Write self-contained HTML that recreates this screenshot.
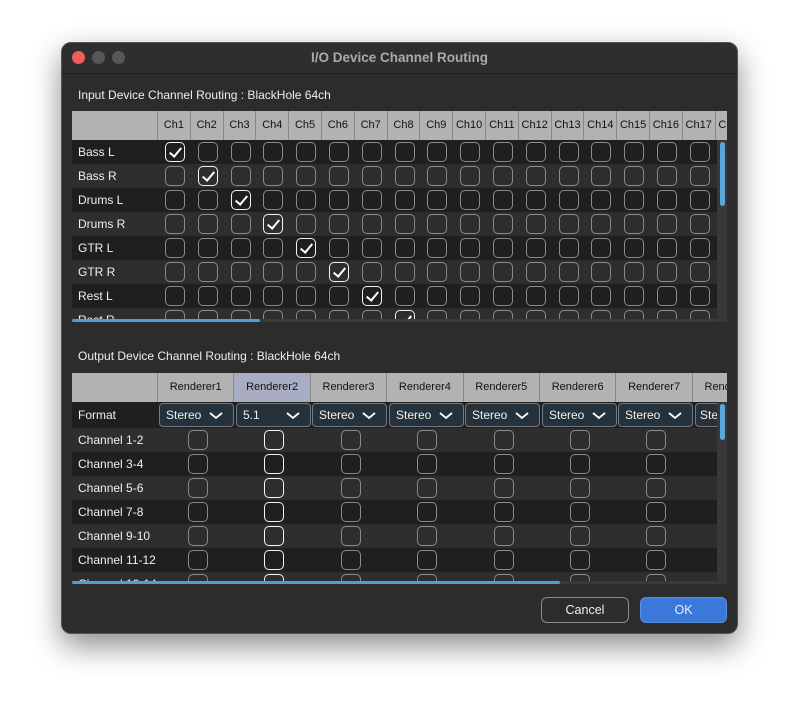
<!DOCTYPE html>
<html><head><style>
*{margin:0;padding:0;box-sizing:border-box}
body{width:799px;height:715px;background:#fff;position:relative;overflow:hidden;font-family:"Liberation Sans",sans-serif}
.win{position:absolute;left:61px;top:42px;width:677px;height:592px;background:#2c2c2c;border-radius:10px;box-shadow:0 12px 30px rgba(0,0,0,.45);border:1px solid #555;overflow:hidden}
.tb{position:absolute;left:0;top:0;width:100%;height:31px;background:#2e2e2e;border-bottom:1px solid #1a1a1a;color:#aaa;font-weight:bold;font-size:13.5px;text-align:center;line-height:29px}
.dot{position:absolute;top:8px;width:13px;height:13px;border-radius:50%;background:#575757}
.abs{position:absolute}
.lbl{position:absolute;color:#eee;font-size:12px}
.hdr{position:absolute;background:#b2b2b2;color:#111;font-size:11px;text-align:center;border-right:1px solid #888}
.row{position:absolute;left:72px;width:648px;height:24px}
.rl{position:absolute;left:78px;color:#f0f0f0;font-size:12px}
.cb{position:absolute;width:20px;height:20px;border:1.5px solid #8a8a8a;border-radius:5px}
.cb.w{border:1.5px solid #f2f2f2}
.cb.w.k::after{content:"";position:absolute;left:6px;top:2px;width:5px;height:10px;border:solid #fff;border-width:0 2px 2px 0;transform:rotate(40deg)}
.combo{position:absolute;top:403px;height:24px;background:#26313a;border:1px solid #6f7a84;border-radius:4px;color:#f0f0f0;font-size:12px;line-height:22px;padding-left:6px}
.combo svg{position:absolute;right:10px;top:8px}
.btn{position:absolute;height:26px;border-radius:6px;color:#eee;font-size:12.5px;text-align:center;line-height:24px}
</style></head><body>
<div class="win">
<div class="tb">I/O Device Channel Routing</div>
<div class="dot" style="left:10px;background:#ed5f57"></div>
<div class="dot" style="left:30px"></div>
<div class="dot" style="left:50px"></div>
</div>
<div class="lbl" style="left:78px;top:88px">Input Device Channel Routing : BlackHole 64ch</div>
<div class="abs" style="left:72px;top:111px;width:655px;height:211px;overflow:hidden" id="inp">
<div class="hdr" style="left:0;top:0;width:86px;height:29px"></div>
</div>
<div class="lbl" style="left:78px;top:349px">Output Device Channel Routing : BlackHole 64ch</div>
<div class="abs" style="left:72px;top:373px;width:655px;height:211px;overflow:hidden" id="out">
<div class="hdr" style="left:0;top:0;width:86px;height:29px"></div>
</div>
<div class="btn" style="left:541px;top:597px;width:88px;border:1px solid #8a8a8a;background:#2c2c2c">Cancel</div>
<div class="btn" style="left:640px;top:597px;width:87px;background:#3a78da;border:1px solid #5b8fe0">OK</div>
<script>
var inp=document.getElementById('inp'),out=document.getElementById('out'),h='';
var names=['Bass L','Bass R','Drums L','Drums R','GTR L','GTR R','Rest L','Rest R'];
for(var c=0;c<18;c++){h+='<div class="hdr" style="left:'+(86+c*32.8)+'px;top:0;width:32.8px;height:29px;line-height:29px">Ch'+(c+1)+'</div>';}
for(var r=0;r<8;r++){var y=29+r*24;
h+='<div class="row" style="left:0;top:'+y+'px;background:'+(r%2?'#2e2e2e':'#1f1f1f')+'"></div>';
h+='<div class="rl" style="left:6px;top:'+(y+5)+'px">'+names[r]+'</div>';
for(var c=0;c<17;c++){h+='<div class="cb'+(c==r?' w k':'')+'" style="left:'+(93+c*32.8)+'px;top:'+(y+2)+'px"></div>';}}
h+='<div class="abs" style="left:0;top:208px;width:655px;height:3px;background:#3a3a3a"></div><div class="abs" style="left:0;top:208px;width:188px;height:3px;background:#4d9fd0;border-radius:2px"></div>';
h+='<div class="abs" style="left:645px;top:29px;width:10px;height:182px;background:#383838"></div><div class="abs" style="left:648px;top:31px;width:5px;height:64px;background:#5aa6d6;border-radius:3px"></div>';
inp.innerHTML+=h;
h='';var cn=['Channel 1-2','Channel 3-4','Channel 5-6','Channel 7-8','Channel 9-10','Channel 11-12','Channel 13-14'];
for(var c=0;c<8;c++){h+='<div class="hdr" style="left:'+(86+c*76.4)+'px;top:0;width:76.4px;height:29px;line-height:29px;'+(c==1?'background:#a8adc4;':'')+'">Renderer'+(c+1)+'</div>';}
h+='<div class="row" style="left:0;top:29px;height:26px;background:#1f1f1f"></div><div class="rl" style="left:6px;top:35px">Format</div>';
for(var r=0;r<7;r++){var y=55+r*24;
h+='<div class="row" style="left:0;top:'+y+'px;background:'+(r%2?'#1f1f1f':'#2e2e2e')+'"></div>';
h+='<div class="rl" style="left:6px;top:'+(y+5)+'px">'+cn[r]+'</div>';
for(var c=0;c<7;c++){h+='<div class="cb'+(c==1?' w':'')+'" style="left:'+(116+c*76.4)+'px;top:'+(y+2)+'px"></div>';}}
h+='<div class="abs" style="left:0;top:208px;width:655px;height:3px;background:#3a3a3a"></div><div class="abs" style="left:0;top:208px;width:488px;height:3px;background:#4d9fd0;border-radius:2px"></div>';
h+='<div class="abs" style="left:645px;top:29px;width:10px;height:182px;background:#383838"></div><div class="abs" style="left:648px;top:31px;width:5px;height:36px;background:#5aa6d6;border-radius:3px"></div>';
out.innerHTML+=h;
</script>
<div class="combo" style="left:159px;width:75px">Stereo<svg width="14" height="8"><path d="M1 1L7 6L13 1" stroke="#fff" stroke-width="1.8" fill="none"/></svg></div>
<div class="combo" style="left:236px;width:75px">5.1<svg width="14" height="8"><path d="M1 1L7 6L13 1" stroke="#fff" stroke-width="1.8" fill="none"/></svg></div>
<div class="combo" style="left:312px;width:75px">Stereo<svg width="14" height="8"><path d="M1 1L7 6L13 1" stroke="#fff" stroke-width="1.8" fill="none"/></svg></div>
<div class="combo" style="left:389px;width:75px">Stereo<svg width="14" height="8"><path d="M1 1L7 6L13 1" stroke="#fff" stroke-width="1.8" fill="none"/></svg></div>
<div class="combo" style="left:465px;width:75px">Stereo<svg width="14" height="8"><path d="M1 1L7 6L13 1" stroke="#fff" stroke-width="1.8" fill="none"/></svg></div>
<div class="combo" style="left:542px;width:75px">Stereo<svg width="14" height="8"><path d="M1 1L7 6L13 1" stroke="#fff" stroke-width="1.8" fill="none"/></svg></div>
<div class="combo" style="left:618px;width:75px">Stereo<svg width="14" height="8"><path d="M1 1L7 6L13 1" stroke="#fff" stroke-width="1.8" fill="none"/></svg></div>
<div class="combo" style="left:695px;width:22px;overflow:hidden;padding-left:4px;border-right:none;border-radius:4px 0 0 4px">Ste</div>
</body></html>
